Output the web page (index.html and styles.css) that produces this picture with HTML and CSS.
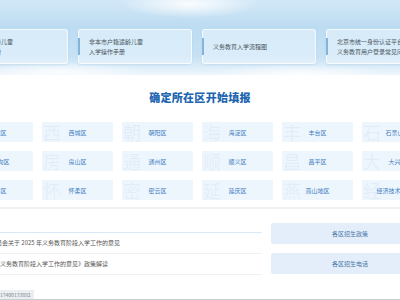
FILE: index.html
```html
<!DOCTYPE html>
<html lang="zh-CN">
<head>
    <meta charset="UTF-8">
    <meta name="viewport" content="width=device-width, initial-scale=1.0">
    <title>义务教育入学服务平台</title>
<link rel="stylesheet" href="styles.css">
</head>
<body>
<div class="page">
<header class="banner">
    <div class="guides">
        <div class="guide"><p>本市户籍适龄儿童<br>入学操作手册</p></div>
        <div class="guide"><p>非本市户籍适龄儿童<br>入学操作手册</p></div>
        <div class="guide"><p>义务教育入学流程图</p></div>
        <div class="guide"><p>北京市统一身份认证平台<br>义务教育用户登录常见问题</p></div>
    </div>
</header>

<section class="pick">
    <h2 class="pick-title">确定所在区开始填报</h2>
    <div class="districts">
        <div class="district"><span class="mark">东</span>东城区</div>
        <div class="district"><span class="mark">西</span>西城区</div>
        <div class="district"><span class="mark">朝</span>朝阳区</div>
        <div class="district"><span class="mark">海</span>海淀区</div>
        <div class="district"><span class="mark">丰</span>丰台区</div>
        <div class="district"><span class="mark">石</span>石景山区</div>
        <div class="district"><span class="mark">门</span>门头沟区</div>
        <div class="district"><span class="mark">房</span>房山区</div>
        <div class="district"><span class="mark">通</span>通州区</div>
        <div class="district"><span class="mark">顺</span>顺义区</div>
        <div class="district"><span class="mark">昌</span>昌平区</div>
        <div class="district"><span class="mark">大</span>大兴区</div>
        <div class="district"><span class="mark">平</span>平谷区</div>
        <div class="district"><span class="mark">怀</span>怀柔区</div>
        <div class="district"><span class="mark">密</span>密云区</div>
        <div class="district"><span class="mark">延</span>延庆区</div>
        <div class="district"><span class="mark">燕</span>燕山地区</div>
        <div class="district"><span class="mark">经</span>经济技术开发区</div>
    </div>
</section>

<section class="notice">
    <ul class="news">
        <li>北京市教育委员会关于 2025 年义务教育阶段入学工作的意见</li>
        <li>《关于 2025 年义务教育阶段入学工作的意见》政策解读</li>
    </ul>
    <div class="links">
        <div class="link">各区招生政策</div>
        <div class="link">各区招生电话</div>
    </div>
</section>

<div class="contact">咨询电话：17400133892</div>
<footer class="foot"></footer>
</div>
</body>
</html>
```

FILE: styles.css
```css
html, body{
    margin: 0;
    overflow: hidden;
}
body{
    background: #fff;
    font-family: "Noto Sans CJK SC", "Noto Sans", sans-serif;
}
.page{
    width: 400px;
    height: 300px;
    overflow: hidden;
}

/* top banner with the sky */
.banner{
    height: 75px;
    overflow: hidden;
    background:
        radial-gradient(ellipse 70px 14px at 190px 4px, rgba(255,255,255,.9), rgba(255,255,255,0)),
        radial-gradient(ellipse 90px 10px at 60px 72px, rgba(255,255,255,.8), rgba(255,255,255,0)),
        radial-gradient(ellipse 90px 10px at 300px 74px, rgba(255,255,255,.8), rgba(255,255,255,0)),
        linear-gradient(180deg, #d3e8f7 0%, #bcdcf2 35%, #c6e1f4 75%, #eef6fc 100%);
}
.guides{
    display: flex;
    gap: 10px;
    width: 486px;
    margin-left: -46px;
    padding-top: 29px;
}
.guide{
    position: relative;
    flex: 1;
    height: 35px;
    display: flex;
    align-items: center;
    padding: 0 10px;
    box-sizing: border-box;
    background: rgba(235,245,253,.55);
    border: 1px solid rgba(255,255,255,.75);
    border-radius: 3px;
    box-shadow: 0 1px 2px rgba(90,140,190,.15);
}
.guide::before{
    content: "";
    position: absolute;
    left: -1px;
    top: 8px;
    width: 2px;
    height: 17px;
    background: #86b3d9;
}
.guide p{
    margin: 0;
    font-size: 6px;
    line-height: 10px;
    color: #4a5560;
    white-space: nowrap;
}

/* district picker */
.pick-title{
    margin: 15px 0 0;
    text-align: center;
    font-size: 11px;
    line-height: 14px;
    font-weight: 900;
    color: #2165b0;
    letter-spacing: .3px;
}
.districts{
    display: grid;
    grid-template-columns: repeat(6, 71px);
    grid-auto-rows: 20px;
    gap: 9px;
    width: 471px;
    margin: 18px 0 0 -38px;
    padding-bottom: 7px;
    border-bottom: 2px solid #eef1f4;
}
.district{
    position: relative;
    overflow: hidden;
    display: flex;
    align-items: center;
    justify-content: center;
    background: #eef6fd;
    font-size: 6px;
    color: #3d7dc2;
    white-space: nowrap;
}
.mark{
    position: absolute;
    left: 1px;
    top: -1px;
    font-size: 18px;
    line-height: 22px;
    font-weight: 400;
    color: rgba(150,190,230,.16);
}

/* policy list and buttons */
.notice{
    display: flex;
    gap: 9px;
    width: 475px;
    margin: 14px 0 0 -46px;
}
.news{
    flex: 1;
    margin: 9px 0 0;
    padding: 0;
    list-style: none;
    border-top: 1px solid #d9e9f5;
}
.news li{
    height: 20px;
    line-height: 20px;
    padding-left: 6px;
    font-size: 6px;
    color: #555;
    white-space: nowrap;
    border-bottom: 1px solid #eef0f3;
}
.links{
    width: 158px;
    display: flex;
    flex-direction: column;
    gap: 9px;
}
.link{
    height: 21px;
    line-height: 21px;
    text-align: center;
    font-size: 6px;
    color: #4a78a8;
    background: #e4eefa;
    border-radius: 2px;
}

.contact{
    width: max-content;
    margin: 15px 0 0 -28px;
    padding: 0 3px;
    height: 9px;
    line-height: 9px;
    font-size: 5px;
    color: #7a8590;
    background: #eceff2;
}
.foot{
    height: 2px;
    background: #c9ced4;
}
```
